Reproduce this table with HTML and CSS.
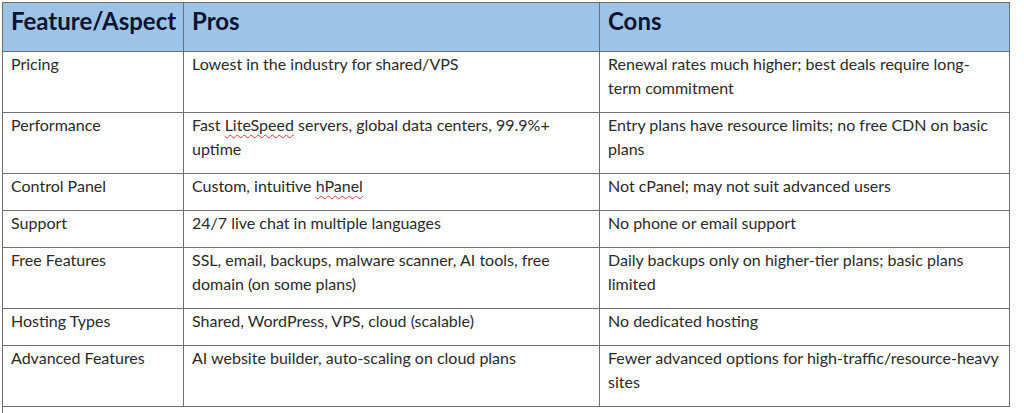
FILE: index.html
```html
<!DOCTYPE html>
<html lang="en">
<head>
<meta charset="utf-8">
<title>Hosting Pros and Cons</title>
<link rel="stylesheet" href="styles.css">
</head>
<body>
<div class="page">
  <table class="compare">
    <colgroup>
      <col class="c-feature">
      <col class="c-pros">
      <col class="c-cons">
    </colgroup>
    <thead>
      <tr><th>Feature/Aspect</th><th>Pros</th><th>Cons</th></tr>
    </thead>
    <tbody>
      <tr><td>Pricing</td><td>Lowest in the industry for shared/VPS</td><td>Renewal rates much higher; best deals require long-term commitment</td></tr>
      <tr><td>Performance</td><td>Fast <span class="spell">LiteSpeed</span> servers, global data centers, 99.9%+ uptime</td><td>Entry plans have resource limits; no free CDN on basic plans</td></tr>
      <tr><td>Control Panel</td><td>Custom, intuitive <span class="spell">hPanel</span></td><td>Not cPanel; may not suit advanced users</td></tr>
      <tr><td>Support</td><td>24/7 live chat in multiple languages</td><td>No phone or email support</td></tr>
      <tr><td>Free Features</td><td>SSL, email, backups, malware scanner, AI tools, free domain (on some plans)</td><td>Daily backups only on higher-tier plans; basic plans limited</td></tr>
      <tr><td>Hosting Types</td><td>Shared, WordPress, VPS, cloud (scalable)</td><td>No dedicated hosting</td></tr>
      <tr><td>Advanced Features</td><td>AI website builder, auto-scaling on cloud plans</td><td>Fewer advanced options for high-traffic/resource-heavy sites</td></tr>
    </tbody>
  </table>
  <div class="next-edge"></div>
</div>
</body>
</html>
```

FILE: styles.css
```css
html, body {
  margin: 0;
  padding: 0;
  background: #ffffff;
}

.page {
  padding: 2px 0 0 2px;
  font-family: Lato, "Open Sans", "Liberation Sans", sans-serif;
}

.compare {
  border-collapse: collapse;
  table-layout: fixed;
  width: 1007px;
  border: 1px solid #6f6f6f;
}

.c-feature { width: 181px; }
.c-pros { width: 416px; }
.c-cons { width: 410px; }

.compare th,
.compare td {
  border: 1px solid #6f6f6f;
  text-align: left;
  vertical-align: top;
}

.compare th {
  background: #9dc3e6;
  color: #0c1432;
  font-weight: 700;
  font-size: 24px;
  line-height: 36px;
  padding: 0 8px 12px 8px;
}

.compare td {
  color: #2a2a2a;
  font-size: 16px;
  line-height: 24px;
  padding: 0 8px 12px 8px;
}

.spell {
  text-decoration: underline wavy #d23a3a;
  text-decoration-thickness: 1px;
  text-underline-offset: 3px;
}

.next-edge {
  width: 0;
  height: 8px;
  border-left: 1px solid #6f6f6f;
}
```
